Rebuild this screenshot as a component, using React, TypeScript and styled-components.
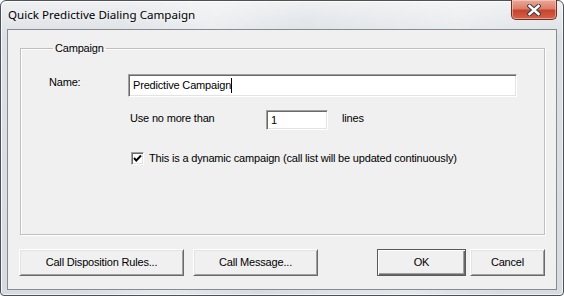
import React from "react";
import styled, { createGlobalStyle } from "styled-components";

const GlobalStyle = createGlobalStyle`
  html, body { margin: 0; padding: 0; background: #ffffff; }
  body { font-family: "Liberation Sans", Arial, sans-serif; }
  * { box-sizing: border-box; }
`;

const Window = styled.div`
  width: 564px;
  height: 296px;
  border: 1px solid #4d5257;
  border-radius: 6px 6px 4px 4px;
  padding: 0 6px 5px 6px;
  display: flex;
  flex-direction: column;
  background:
    linear-gradient(100deg, rgba(255,255,255,0) 20%, rgba(255,255,255,0.35) 35%, rgba(255,255,255,0) 50%, rgba(255,255,255,0.3) 75%, rgba(255,255,255,0) 90%),
    linear-gradient(to bottom, #eef0f2 0%, #dde1e5 12%, #d8dce1 100%);
  box-shadow: inset 1px 1px 0 rgba(255,255,255,0.8), inset -1px -1px 0 rgba(255,255,255,0.6);
`;

const TitleBar = styled.div`
  height: 28px;
  display: flex;
  align-items: flex-start;
  justify-content: space-between;
`;

const Title = styled.div`
  font-family: "Segoe UI", "Noto Sans", "Open Sans", sans-serif;
  font-size: 11.6px;
  color: #000;
  padding: 6px 0 0 1px;
  line-height: 16px;
  text-shadow: 0 0 6px rgba(255,255,255,0.9);
`;

const CloseButton = styled.div`
  width: 46px;
  height: 20px;
  margin-top: -1px;
  border: 1px solid #6f2f25;
  border-top: none;
  border-radius: 0 0 5px 5px;
  background: linear-gradient(to bottom, #e9a99a 0%, #dc7e6a 45%, #c8432c 55%, #d2634a 100%);
  box-shadow: inset 0 0 0 1px rgba(255, 220, 210, 0.5);
  display: flex;
  align-items: center;
  justify-content: center;
`;

const Client = styled.div`
  flex: 1;
  border: 1px solid #858b91;
  background: #f0f0f0;
  padding: 12px 11px 13px 11px;
  display: flex;
  flex-direction: column;
  font-size: 11px;
  letter-spacing: -0.18px;
  color: #000;
`;

const Group = styled.fieldset`
  margin: 0 0 0 1px;
  height: 193px;
  border: 1px solid #bfbfbf;
  box-shadow: inset 1px 1px 0 #ffffff, 1px 1px 0 #ffffff;
  padding: 19px 0 0 28px;
  display: grid;
  grid-template-columns: 79px 1fr;
  grid-auto-rows: min-content;
  align-content: start;
`;

const Legend = styled.legend`
  padding: 0 2px;
  margin-left: 4px;
  line-height: 13px;
  font-size: 11px;
`;

const Label = styled.div`
  padding-top: 2px;
  line-height: 13px;
`;

const Field = styled.div<{ $width?: number; $height: number }>`
  width: ${(p) => (p.$width ? `${p.$width}px` : "auto")};
  height: ${(p) => p.$height}px;
  background: #ffffff;
  border-style: solid;
  border-width: 1px;
  border-color: #a0a0a0 #ffffff #ffffff #a0a0a0;
  box-shadow: inset 1px 1px 0 #696969, inset -1px -1px 0 #e3e3e3;
  padding: 0 0 0 4px;
  display: flex;
  align-items: center;
  line-height: 13px;
  white-space: nowrap;
`;

const Caret = styled.span`
  display: inline-block;
  width: 1px;
  height: 15px;
  background: #000;
  margin-left: 0;
`;

const SubRow = styled.div<{ $top: number; $indent: number }>`
  grid-column: 2;
  margin-top: ${(p) => p.$top}px;
  margin-left: ${(p) => p.$indent}px;
  display: flex;
  align-items: center;
`;

const RowText = styled.span<{ $width?: number; $shift?: number; $gap?: number }>`
  display: inline-block;
  width: ${(p) => (p.$width ? `${p.$width}px` : "auto")};
  margin-left: ${(p) => p.$gap ?? 0}px;
  line-height: 13px;
  position: relative;
  top: ${(p) => p.$shift ?? 0}px;
`;

const Checkbox = styled.div`
  width: 13px;
  height: 13px;
  background: #ffffff;
  border-style: solid;
  border-width: 1px;
  border-color: #a0a0a0 #ffffff #ffffff #a0a0a0;
  box-shadow: inset 1px 1px 0 #696969, inset -1px -1px 0 #e3e3e3;
  display: flex;
  align-items: center;
  justify-content: center;
  margin-right: 5px;
  flex: none;
`;

const ButtonRow = styled.div`
  margin-top: 14px;
  display: flex;
  align-items: center;
`;

const Button = styled.div<{ $width: number; $gap?: number; $default?: boolean }>`
  width: ${(p) => p.$width}px;
  height: 27px;
  margin-left: ${(p) => p.$gap ?? 0}px;
  display: flex;
  align-items: center;
  justify-content: center;
  background: #f0f0f0;
  border-style: solid;
  border-width: 1px;
  border-color: ${(p) =>
    p.$default ? "#5a5a5a" : "#ffffff #696969 #696969 #ffffff"};
  box-shadow: ${(p) =>
    p.$default
      ? "inset 1px 1px 0 #ffffff, inset -1px -1px 0 #696969, inset -2px -2px 0 #a0a0a0"
      : "inset 1px 1px 0 #e3e3e3, inset -1px -1px 0 #a0a0a0"};
  line-height: 13px;
  padding-bottom: 1px;
`;

const Spacer = styled.div`
  flex: 1;
`;

export default function App() {
  return (
    <>
      <GlobalStyle />
      <Window>
        <TitleBar>
          <Title>Quick Predictive Dialing Campaign</Title>
          <CloseButton>
            <svg width="14" height="12" viewBox="0 0 14 12">
              <path d="M2.5 2 L11.5 10 M11.5 2 L2.5 10" stroke="#3b3f45" strokeWidth="4.4" strokeLinecap="square" />
              <path d="M2.5 2 L11.5 10 M11.5 2 L2.5 10" stroke="#ffffff" strokeWidth="2.4" strokeLinecap="square" />
            </svg>
          </CloseButton>
        </TitleBar>
        <Client>
          <Group>
            <Legend>Campaign</Legend>
            <Label>Name:</Label>
            <Field $width={389} $height={23}>
              Predictive Campaign<Caret />
            </Field>
            <SubRow $top={13} $indent={2}>
              <RowText $width={136} $shift={-2}>Use no more than</RowText>
              <Field $width={62} $height={20}>1</Field>
              <RowText $shift={-2} $gap={14}>lines</RowText>
            </SubRow>
            <SubRow $top={22} $indent={3}>
              <Checkbox>
                <svg width="9" height="9" viewBox="0 0 9 9">
                  <path d="M1 4 L3.3 6.5 L8 1.5" stroke="#000" strokeWidth="1.9" fill="none" />
                </svg>
              </Checkbox>
              <RowText>This is a dynamic campaign (call list will be updated continuously)</RowText>
            </SubRow>
          </Group>
          <ButtonRow>
            <Button $width={165}>Call Disposition Rules...</Button>
            <Button $width={125} $gap={9}>Call Message...</Button>
            <Spacer />
            <Button $width={89} $default>OK</Button>
            <Button $width={75} $gap={4}>Cancel</Button>
          </ButtonRow>
        </Client>
      </Window>
    </>
  );
}
